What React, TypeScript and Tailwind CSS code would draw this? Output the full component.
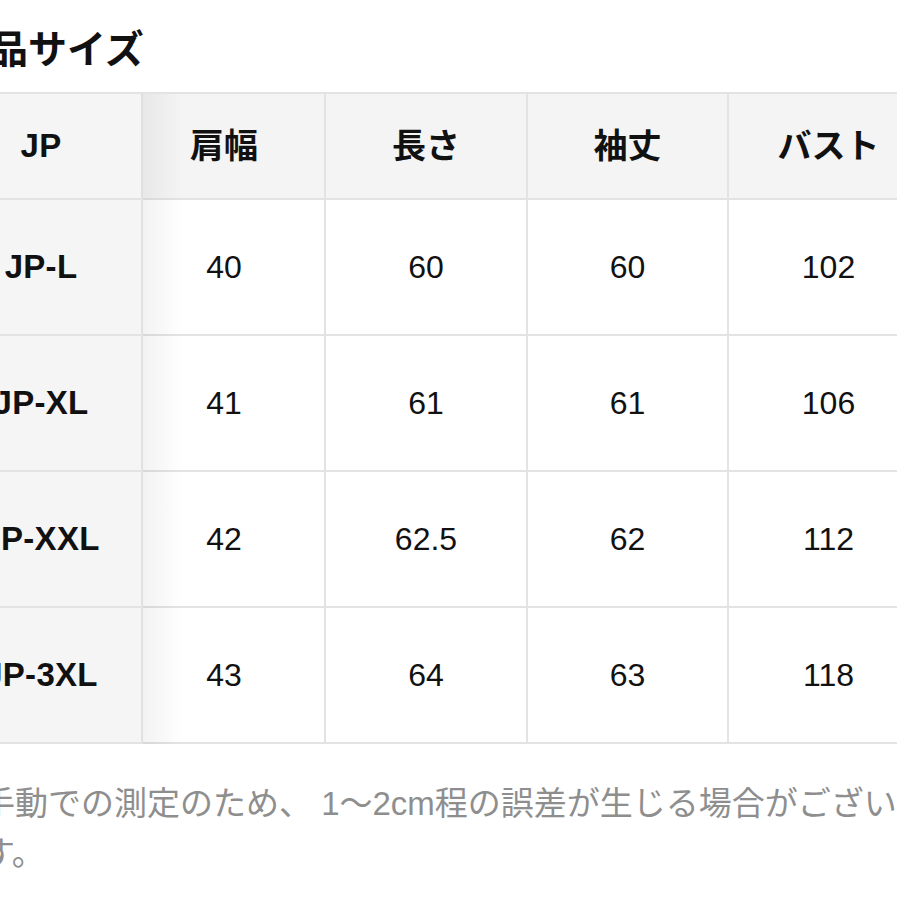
import React from "react";

const cols = ["肩幅", "長さ", "袖丈", "バスト"];
const rows: { label: string; values: string[] }[] = [
  { label: "JP-L", values: ["40", "60", "60", "102"] },
  { label: "JP-XL", values: ["41", "61", "61", "106"] },
  { label: "JP-XXL", values: ["42", "62.5", "62", "112"] },
  { label: "JP-3XL", values: ["43", "64", "63", "118"] },
];

function Row({
  label,
  cells,
  header,
}: {
  label: string;
  cells: string[];
  header?: boolean;
}) {
  return (
    <div
      className={`flex border-b-2 border-[#e3e3e3] ${
        header ? "h-[106px] bg-[#f4f4f4]" : "h-[136px] bg-white"
      }`}
    >
      <div className="w-[202px] shrink-0 flex items-center justify-center bg-[#f5f5f5] border-r-2 border-[#e0e0e0] text-[33px] font-bold text-[#111] tracking-[0.3px]">
        {label}
      </div>
      <div className="flex-1 overflow-hidden">
        <div className="flex h-full ml-[-19px]">
          {cells.map((c, i) => (
            <div
              key={i}
              className={`shrink-0 h-full flex items-center justify-center border-r-2 border-[#e3e3e3] text-[#111] ${
                i <= 1 ? "w-[202px]" : "w-[201px]"
              } ${header ? "text-[34px] font-bold" : "text-[32px]"}`}
            >
              {c}
            </div>
          ))}
        </div>
      </div>
    </div>
  );
}

export default function App() {
  return (
    <div
      className="w-[897px] h-[897px] overflow-hidden bg-white"
      style={{
        fontFamily:
          '"Liberation Sans", "Noto Sans CJK JP", "Noto Sans", sans-serif',
      }}
    >
      <div className="ml-[-59px] w-[1000px] pt-[31px]">
        <h2 className="pl-[9px] text-[39px] leading-[38px] font-bold text-[#111]">
          商品サイズ
        </h2>
        <div className="relative mt-[23px] border-t-2 border-[#e3e3e3]">
          <Row label="JP" cells={cols} header />
          {rows.map((r) => (
            <Row key={r.label} label={r.label} cells={r.values} />
          ))}
          <div className="pointer-events-none absolute top-0 bottom-0 left-[202px] w-[40px] bg-gradient-to-r from-black/[0.05] to-transparent" />
        </div>
        <p className="mt-[35px] pl-[8px] text-[33px] leading-[50px] text-[#8e8e8e] whitespace-nowrap">
          ※手動での測定のため、 1〜2cm程の誤差が生じる場合がござい
          <br />
          ます。
        </p>
      </div>
    </div>
  );
}
